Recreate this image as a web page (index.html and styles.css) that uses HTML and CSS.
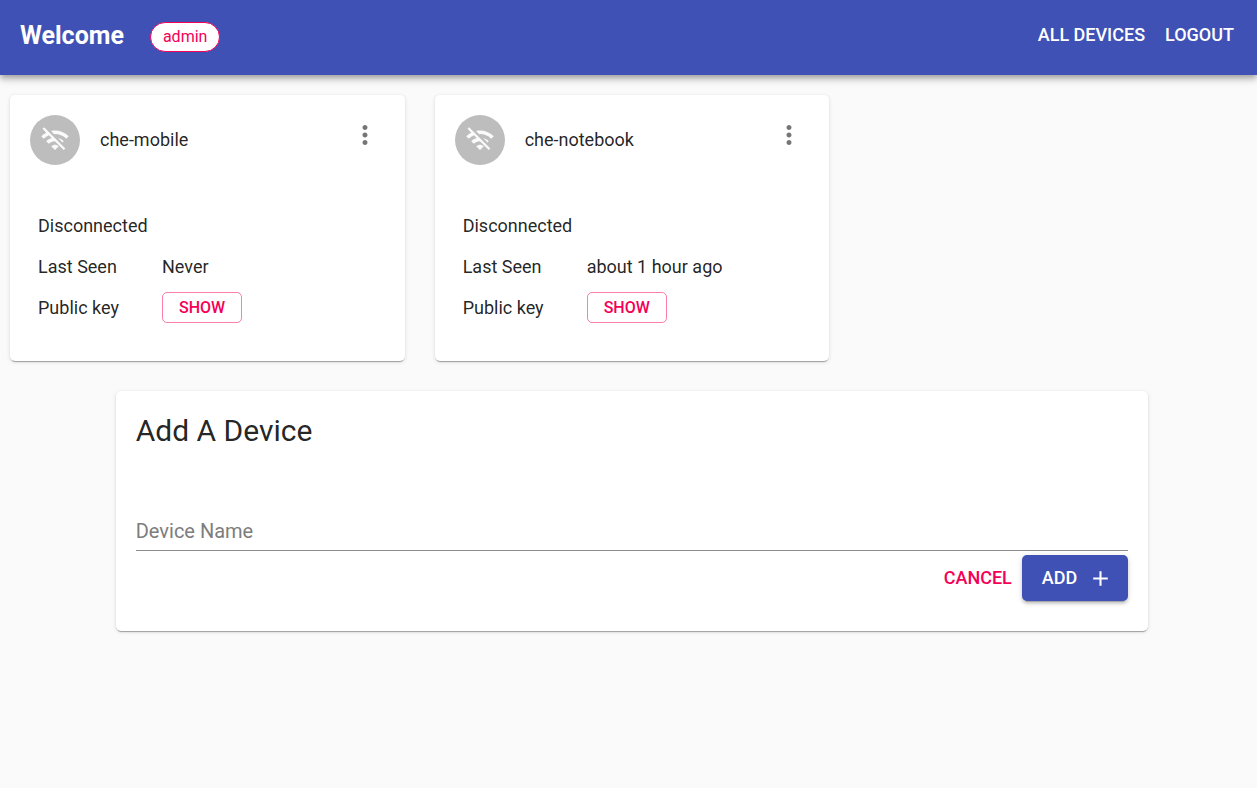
FILE: index.html
```html
<!DOCTYPE html>
<html lang="en">
<head>
<meta charset="utf-8">
<meta name="viewport" content="width=device-width, initial-scale=1">
<title>Devices</title>
<link rel="stylesheet" href="styles.css">
</head>
<body>
<svg class="sprite" aria-hidden="true">
  <symbol id="wifi-off" viewBox="0 0 24 24"><path d="M22.99 9C19.15 5.16 13.8 3.76 8.84 4.78l2.52 2.52c3.47-.17 6.99 1.05 9.63 3.7l2-2zm-4 4c-1.29-1.29-2.84-2.13-4.49-2.56l3.53 3.53.96-.97zM2 3.05L5.07 6.1C3.6 6.82 2.22 7.78 1 9l1.99 2c1.24-1.24 2.67-2.16 4.2-2.77l2.24 2.24C7.81 10.89 6.27 11.73 5 13v.01L6.99 15c1.36-1.36 3.14-2.04 4.92-2.06L18.98 20l1.27-1.26L3.29 1.79 2 3.05zM9 17l3 3 3-3c-1.65-1.66-4.34-1.66-6 0z"/></symbol>
  <symbol id="more" viewBox="0 0 24 24"><path d="M12 8c1.1 0 2-.9 2-2s-.9-2-2-2-2 .9-2 2 .9 2 2 2zm0 2c-1.1 0-2 .9-2 2s.9 2 2 2 2-.9 2-2-.9-2-2-2zm0 6c-1.1 0-2 .9-2 2s.9 2 2 2 2-.9 2-2-.9-2-2-2z"/></symbol>
  <symbol id="plus" viewBox="0 0 24 24"><path d="M19 13h-6v6h-2v-6H5v-2h6V5h2v6h6v2z"/></symbol>
</svg>
<header class="topbar">
  <h1 class="brand">Welcome</h1>
  <span class="chip">admin</span>
  <nav class="nav">
    <a class="nav-link" href="#devices">All Devices</a>
    <a class="nav-link" href="#logout">Logout</a>
  </nav>
</header>
<main class="content">
  <section class="devices" id="devices">
    <article class="card">
      <div class="card-head">
        <span class="avatar"><svg class="icon"><use href="#wifi-off"/></svg></span>
        <h2 class="card-title">che-mobile</h2>
        <button class="icon-button" type="button" aria-label="Device options"><svg class="icon"><use href="#more"/></svg></button>
      </div>
      <table class="details">
        <tbody>
          <tr><td colspan="2">Disconnected</td></tr>
          <tr><td class="label">Last Seen</td><td>Never</td></tr>
          <tr><td class="label">Public key</td><td><button class="button outlined" type="button">Show</button></td></tr>
        </tbody>
      </table>
    </article>
    <article class="card">
      <div class="card-head">
        <span class="avatar"><svg class="icon"><use href="#wifi-off"/></svg></span>
        <h2 class="card-title">che-notebook</h2>
        <button class="icon-button" type="button" aria-label="Device options"><svg class="icon"><use href="#more"/></svg></button>
      </div>
      <table class="details">
        <tbody>
          <tr><td colspan="2">Disconnected</td></tr>
          <tr><td class="label">Last Seen</td><td>about 1 hour ago</td></tr>
          <tr><td class="label">Public key</td><td><button class="button outlined" type="button">Show</button></td></tr>
        </tbody>
      </table>
    </article>
  </section>
  <form class="card add-form">
    <h2 class="form-title">Add A Device</h2>
    <input class="field" type="text" placeholder="Device Name" aria-label="Device Name">
    <div class="actions">
      <button class="button text" type="button">Cancel</button>
      <button class="button filled" type="button">Add <svg class="icon"><use href="#plus"/></svg></button>
    </div>
  </form>
</main>
</body>
</html>
```
FILE: styles.css
```css
* { box-sizing: border-box; }

body {
  margin: 0;
  background: #fafafa;
  color: rgba(0, 0, 0, 0.87);
  font-family: Roboto, "Liberation Sans", sans-serif;
  font-size: 18px;
  line-height: 26px;
}

.sprite { display: none; }

.icon {
  display: block;
  flex: none;
  width: 30px;
  height: 30px;
  fill: currentColor;
}

.topbar {
  display: flex;
  align-items: center;
  height: 75px;
  padding: 0 23px 4px 20px;
  background: #3f51b5;
  color: #fff;
  box-shadow: 0 3px 5px -1px rgba(0, 0, 0, 0.2), 0 5px 6px 0 rgba(0, 0, 0, 0.14), 0 1px 13px 0 rgba(0, 0, 0, 0.12);
}

.brand {
  margin: 0 26px 0 0;
  font-size: 25px;
  line-height: 40px;
  font-weight: 700;
}

.chip {
  margin-top: 2px;
  padding: 0 12px;
  border: 1px solid #f50057;
  border-radius: 15px;
  background: #fff;
  color: #f50057;
  font-size: 16px;
  line-height: 28px;
}

.nav {
  display: flex;
  gap: 20px;
  margin: 0 0 2px auto;
}

.nav-link {
  color: inherit;
  font-weight: 500;
  text-decoration: none;
  text-transform: uppercase;
}

.content { padding: 20px 3px 20px 10px; }

.devices {
  display: grid;
  grid-template-columns: repeat(3, 1fr);
  gap: 30px;
}

.card {
  border-radius: 5px;
  background: #fff;
  box-shadow: 0 3px 1px -2px rgba(0, 0, 0, 0.2), 0 1px 1px 0 rgba(0, 0, 0, 0.14), 0 1px 4px 0 rgba(0, 0, 0, 0.12);
}

.card-head {
  display: flex;
  align-items: center;
  gap: 20px;
  padding: 20px;
}

.avatar {
  display: grid;
  place-items: center;
  width: 50px;
  height: 50px;
  border-radius: 50%;
  background: #bdbdbd;
  color: #fafafa;
}

.card-title {
  flex: 1;
  margin: 0;
  font-size: 18px;
  font-weight: 400;
}

.icon-button {
  align-self: flex-start;
  margin: -10px -10px 0 0;
  padding: 15px;
  border: 0;
  background: none;
  color: rgba(0, 0, 0, 0.54);
}

.details {
  margin: 20px;
  padding-bottom: 13px;
  border-spacing: 0;
}

.details td {
  height: 41px;
  padding: 0 8px;
}

.label { width: 124px; }

.button {
  border: 0;
  border-radius: 5px;
  background: none;
  color: #f50057;
  font-family: inherit;
  font-size: 18px;
  font-weight: 500;
  line-height: 30px;
  text-transform: uppercase;
}

.outlined {
  display: block;
  padding: 0 16px;
  border: 1px solid rgba(245, 0, 87, 0.5);
  font-size: 16px;
  line-height: 29px;
}

.add-form {
  width: 83%;
  margin: 30px auto 0;
  padding: 20px 20px 30px;
}

.form-title {
  margin: 0;
  font-size: 30px;
  line-height: 40px;
  font-weight: 400;
}

.field {
  display: block;
  width: 100%;
  height: 40px;
  margin-top: 60px;
  padding: 0;
  border: 0;
  border-bottom: 1px solid #8c8c8c;
  background: none;
  color: inherit;
  font-family: inherit;
  font-size: 20px;
}

.field::placeholder { color: #7d7d7d; }

.actions {
  display: flex;
  justify-content: flex-end;
  align-items: center;
  margin-top: 4px;
}

.text { padding: 8px 10px; }

.filled {
  display: flex;
  align-items: center;
  gap: 11px;
  padding: 8px 20px;
  background: #3f51b5;
  color: #fff;
  box-shadow: 0 4px 1px -3px rgba(0, 0, 0, 0.2), 0 3px 3px 0 rgba(0, 0, 0, 0.14), 0 1px 6px 0 rgba(0, 0, 0, 0.12);
}

.filled .icon {
  width: 25px;
  height: 25px;
  margin-right: -5px;
}
```
